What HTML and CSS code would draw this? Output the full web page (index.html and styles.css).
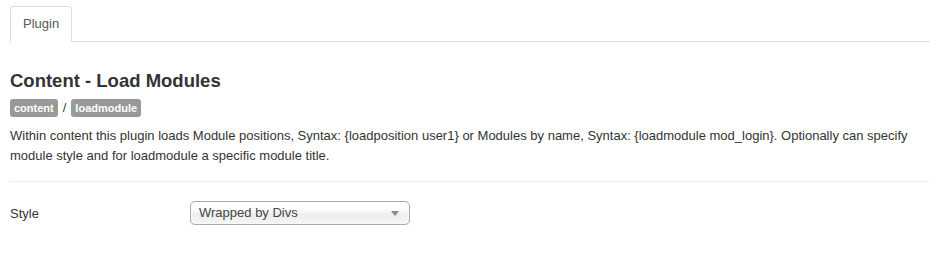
FILE: index.html
```html
<!DOCTYPE html>
<html lang="en">
<head>
    <meta charset="UTF-8">
    <meta name="viewport" content="width=device-width, initial-scale=1.0">
    <title>Plugin: Content - Load Modules</title>
    <link rel="stylesheet" href="styles.css">
</head>
<body>
    <div class="page">
        <ul class="nav-tabs">
            <li class="active"><a href="#details">Plugin</a></li>
        </ul>

        <div class="tab-content">
            <h3 class="plugin-title">Content - Load Modules</h3>
            <div class="plugin-group">
                <span class="label">content</span>
                <span class="sep">/</span>
                <span class="label">loadmodule</span>
            </div>
            <p class="plugin-desc">Within content this plugin loads Module positions, Syntax: {loadposition user1} or Modules by name, Syntax: {loadmodule mod_login}. Optionally can specify module style and for loadmodule a specific module title.</p>
            <hr>
            <div class="control-group">
                <label class="control-label" for="style">Style</label>
                <div class="controls">
                    <div class="chzn-select" id="style">
                        <span>Wrapped by Divs</span>
                        <b class="arrow"></b>
                    </div>
                </div>
            </div>
        </div>
    </div>
</body>
</html>
```

FILE: styles.css
```css
body {
    margin: 0;
    font-family: "Liberation Sans", Arial, sans-serif;
    font-size: 13px;
    line-height: 18px;
    color: #333;
    background-color: #fff;
}
.page {
    padding: 6px 0 0 10px;
}
.nav-tabs {
    list-style: none;
    margin: 0 0 27px 0;
    padding: 0;
    display: flex;
    border-bottom: 1px solid #ddd;
}
.nav-tabs li {
    margin-bottom: -1px;
}
.nav-tabs a {
    display: block;
    padding: 8px 12px;
    color: #555;
    text-decoration: none;
    background-color: #fff;
    border: 1px solid #ddd;
    border-bottom-color: transparent;
    border-radius: 4px 4px 0 0;
}
.tab-content {
    padding-right: 1px;
}
.plugin-title {
    margin: 0 0 6px 0;
    font-size: 18.5px;
    line-height: 24px;
    font-weight: bold;
    color: #333;
}
.plugin-group {
    display: flex;
    align-items: center;
    gap: 5px;
    margin-bottom: 9px;
}
.label {
    display: inline-block;
    padding: 2px 4px;
    font-size: 11px;
    font-weight: bold;
    line-height: 14px;
    color: #fff;
    background-color: #999;
    border-radius: 3px;
}
.sep {
    font-size: 13px;
}
.plugin-desc {
    margin: 0 0 15px 0;
    line-height: 20px;
}
hr {
    margin: 0 0 18px 0;
    border: 0;
    border-top: 1px solid #eee;
    border-bottom: 1px solid #fff;
}
.control-group {
    display: flex;
    align-items: center;
}
.control-label {
    width: 180px;
    padding-top: 2px;
}
.chzn-select {
    width: 220px;
    height: 24px;
    box-sizing: border-box;
    display: flex;
    align-items: center;
    justify-content: space-between;
    padding: 0 10px 0 8px;
    border: 1px solid #aaa;
    border-radius: 5px;
    background: linear-gradient(#fff 20%, #f6f6f6 50%, #eee 52%, #f4f4f4 100%);
    box-shadow: 0 0 3px #fff inset, 0 1px 1px rgba(0, 0, 0, 0.1);
    color: #444;
}
.arrow {
    width: 0;
    height: 0;
    border-left: 4px solid transparent;
    border-right: 4px solid transparent;
    border-top: 5px solid #888;
}
```
